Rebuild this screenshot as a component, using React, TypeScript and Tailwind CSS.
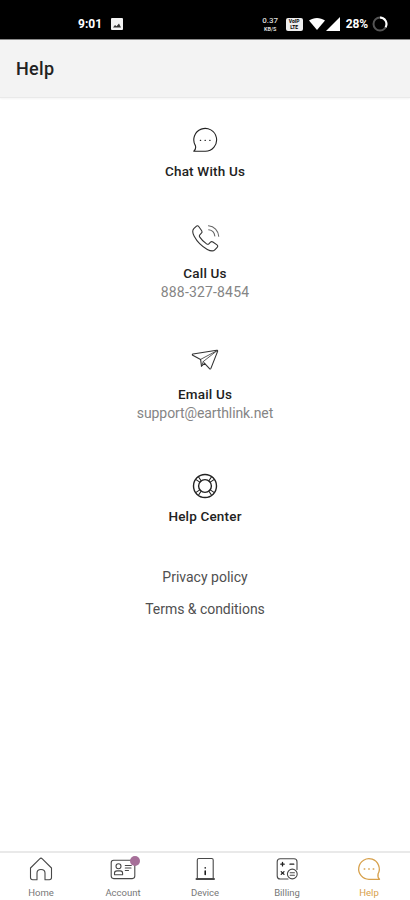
import React from "react";

type DrawingProps = { className?: string; viewBox: string; children: React.ReactNode };

function Drawing({ className = "", viewBox, children }: DrawingProps) {
  return (
    <svg viewBox={viewBox} className={`block shrink-0 ${className}`} fill="none" stroke="currentColor" strokeWidth="1.1" strokeLinecap="round" strokeLinejoin="round" aria-hidden="true">
      {children}
    </svg>
  );
}

function ChatIcon() {
  return (
    <Drawing viewBox="0 0 28 28" className="h-7 w-7 text-[#222]">
      <path d="M4.4 18.6A11.4 11.4 0 1 1 14.3 24.2H2.8C4.4 22.8 5.1 21 4.4 18.6Z" />
      <path d="M9.3 13.3h.4M14 13.3h.4M18.7 13.3h.4" strokeWidth="1.2" />
    </Drawing>
  );
}

function PhoneIcon() {
  return (
    <Drawing viewBox="0 0 30 30" className="h-[30px] w-[30px] text-[#333]">
      <path d="M3.8 4.6 6.2 2.3C7 1.5 8 1.6 8.7 2.5L11.7 6.7C12.3 7.6 12.2 8.5 11.4 9.2L9.8 10.8C9.1 11.5 9.2 12.3 9.8 13.1 11.6 15.8 13.8 18 16.6 19.9 17.4 20.4 18.2 20.5 18.9 19.8L20.5 18.2C21.2 17.5 22 17.4 22.9 18L27 20.9C27.9 21.6 28 22.5 27.2 23.3L24.8 25.8C23.3 27.3 20.8 27.2 17.3 25.4 11.7 22.4 7.2 17.9 4.2 12.3 2.4 8.8 2.3 6.2 3.8 4.6Z" />
      <path d="M18.5 1.8C24.2 2.2 28.3 6.5 28.7 12.2M18.7 5.8C22.3 6.3 24.4 8.6 24.8 12" stroke="#666" />
    </Drawing>
  );
}

function PlaneIcon() {
  return (
    <Drawing viewBox="0 0 28 22" className="h-[22px] w-7 text-[#333]">
      <path d="M1.7 6.2C1.1 5.8 1.2 5.2 2 5L25.7 1.2C26.5 1.1 26.9 1.6 26.6 2.4L19.9 19.4C19.6 20.1 19 20.2 18.5 19.6L13.6 14.3 10.5 17.2 9.6 10.4Z" />
      <path d="M9.6 10.4 26.3 1.5M10.5 17.2 12.3 12.5 26.3 1.5M12.3 12.5 13.6 14.3" strokeWidth="0.8" />
    </Drawing>
  );
}

function BuoyIcon() {
  return (
    <Drawing viewBox="0 0 26 26" className="h-[26px] w-[26px] text-[#222]">
      <circle cx="13" cy="13" r="11.5" strokeWidth="1.4" />
      <circle cx="13" cy="13" r="6.4" strokeWidth="1.4" />
      <path d="M4 6.6 7.8 9.1M6.6 4 9.1 7.8M19.4 4 16.9 7.8M22 6.6 18.2 9.1M4 19.4 7.8 16.9M6.6 22 9.1 18.2M19.4 22 16.9 18.2M22 19.4 18.2 16.9" />
    </Drawing>
  );
}

function StatusBar() {
  return (
    <div className="flex h-10 items-center border-b border-[#8a8a8a] bg-black pt-[9px] pl-[78px] pr-[22px] text-white">
      <span className="w-[33px] text-[12px] leading-4 font-bold">9:01</span>
      <svg viewBox="0 0 12 12" className="h-3 w-3" aria-hidden="true">
        <rect width="12" height="12" rx="1" fill="#f3f3f3" />
        <path d="M2 9.5 4 7l1.5 1.2L8 5.5l2 4z" fill="#333" />
      </svg>
      <div className="ml-auto flex items-center">
        <div className="flex w-[17px] flex-col items-center text-[#ddd]">
          <span className="text-[8px] leading-[10px] font-medium">0.37</span>
          <span className="text-[5.5px] leading-[7px] font-bold">KB/S</span>
        </div>
        <div className="ml-[7px] flex h-[13px] w-[17px] flex-col items-center justify-center rounded-[2px] bg-[#eee] text-black">
          <span className="text-[5px] leading-[6px] font-bold">VoIP</span>
          <span className="text-[5px] leading-[6px] font-bold">LTE</span>
        </div>
        <svg viewBox="0 0 32 14" className="ml-[6px] h-[14px] w-8" fill="white" aria-hidden="true">
          <path d="M0 3.6C4.8 0 11.2 0 16 3.6L8 13Z" />
          <path d="M31 0V14H17Z" />
        </svg>
        <span className="ml-[5px] text-[12px] leading-4 font-bold tracking-[-0.1px]">28%</span>
        <svg viewBox="0 0 16 16" className="ml-[4px] h-4 w-4" fill="none" strokeWidth="2" aria-hidden="true">
          <circle cx="8" cy="8" r="6.5" stroke="#555" />
          <path d="M8 1.5A6.5 6.5 0 0 1 13.6 11.2" stroke="#fff" />
        </svg>
      </div>
    </div>
  );
}

function HomeGlyph() {
  return (
    <Drawing viewBox="0 0 26 26" className="h-[26px] w-[26px]">
      <path d="M2.5 12 11.7 2.8Q13 1.6 14.3 2.8L23.5 12V21.5Q23.5 23.7 21.3 23.7H17V17Q17 13.5 13 13.5T9 17V23.7H4.7Q2.5 23.7 2.5 21.5Z" />
    </Drawing>
  );
}

function AccountGlyph() {
  return (
    <div className="relative">
      <Drawing viewBox="0 0 26 26" className="h-[26px] w-[26px]">
        <rect x="1.2" y="4.2" width="23.6" height="18.4" rx="2.5" />
        <circle cx="8.5" cy="10.3" r="2.5" />
        <path d="M4.5 18.7V17.2Q4.5 14.9 7 14.9H10.2Q12.6 14.9 12.6 17.2V18.7ZM15.3 9.5H21.3M15.3 12H21M15.3 14.5H18.5" />
      </Drawing>
      <span className="absolute top-0 left-[19.5px] h-[10px] w-[10px] rounded-full bg-[#a66f99]" />
    </div>
  );
}

function DeviceGlyph() {
  return (
    <Drawing viewBox="0 0 26 26" className="h-[26px] w-[26px]">
      <path d="M5.3 22V4Q5.3 2.5 6.8 2.5H19.7Q21.2 2.5 21.2 4V22" />
      <path d="M4.5 23H22" strokeWidth="2" />
      <path d="M13.2 11.8V12M13.2 15V18.5" stroke="#111" strokeWidth="1.5" />
    </Drawing>
  );
}

function BillingGlyph() {
  return (
    <Drawing viewBox="0 0 26 26" className="h-[26px] w-[26px]">
      <path d="M14 23H6.2Q3.2 23 3.2 20V5.8Q3.2 2.8 6.2 2.8H20Q23 2.8 23 5.8V13.5" />
      <path d="M6.8 8.2H10.2M8.5 6.5V9.9M16 8.2H19.8M7.2 15.6 10 18.4M10 15.6 7.2 18.4" stroke="#222" strokeWidth="1.3" />
      <circle cx="18.3" cy="18" r="4.9" />
      <path d="M16.2 16.8H20.4M16.2 19.2H20.4" />
    </Drawing>
  );
}

function HelpGlyph() {
  return (
    <Drawing viewBox="0 0 26 26" className="h-[26px] w-[26px]">
      <path d="M22.1 17.8A10.3 10.3 0 1 0 13 23.3H23.5C22.2 22 21.6 20.2 22.1 17.8Z" strokeWidth="1.3" />
      <path d="M8.3 13h.4M12.8 13h.4M17.3 13h.4" strokeWidth="1.6" />
    </Drawing>
  );
}

const tabs = [
  { label: "Home", Glyph: HomeGlyph, active: false },
  { label: "Account", Glyph: AccountGlyph, active: false },
  { label: "Device", Glyph: DeviceGlyph, active: false },
  { label: "Billing", Glyph: BillingGlyph, active: false },
  { label: "Help", Glyph: HelpGlyph, active: true },
];

export default function App() {
  return (
    <div className="flex h-[900px] w-[410px] flex-col overflow-hidden bg-white font-['Roboto',sans-serif]">
      <StatusBar />
      <header className="flex h-[58px] items-center border-b border-[#e9e9e9] bg-[#f3f3f3] pl-4 shadow-[0_1px_2px_rgba(0,0,0,0.05)]">
        <h1 className="text-[18px] leading-6 font-medium tracking-[0.3px] text-[#222]">Help</h1>
      </header>
      <main className="flex flex-1 flex-col items-center pt-[29px]">
        <section className="flex h-[97px] flex-col items-center">
          <ChatIcon />
          <h2 className="mt-[6px] text-[13.5px] leading-5 font-medium tracking-[0.18px] text-[#222]">Chat With Us</h2>
        </section>
        <section className="flex h-[125px] flex-col items-center">
          <PhoneIcon />
          <h2 className="mt-[9px] text-[13.5px] leading-5 font-medium tracking-[0.18px] text-[#222]">Call Us</h2>
          <p className="text-[14px] leading-[19px] tracking-[0.17px] text-[#858585]">888-327-8454</p>
        </section>
        <section className="flex h-[124px] flex-col items-center">
          <PlaneIcon />
          <h2 className="mt-[13px] text-[13.5px] leading-5 font-medium tracking-[0.18px] text-[#222]">Email Us</h2>
          <p className="text-[14px] leading-[19px] tracking-[-0.1px] text-[#858585]">support@earthlink.net</p>
        </section>
        <section className="flex h-[94px] flex-col items-center">
          <BuoyIcon />
          <h2 className="mt-[7px] text-[13.5px] leading-5 font-medium tracking-[0.18px] text-[#222]">Help Center</h2>
        </section>
        <a className="text-[14px] leading-5 text-[#505050]">Privacy policy</a>
        <a className="mt-3 text-[14px] leading-5 tracking-[-0.04px] text-[#505050]">Terms &amp; conditions</a>
      </main>
      <nav className="grid h-[49px] grid-cols-5 border-t-2 border-[#e9e9e9] bg-white">
        {tabs.map(({ label, Glyph, active }) => (
          <div key={label} className={`flex flex-col items-center pt-[3px] ${active ? "text-[#d7a04b]" : "text-[#484848]"}`}>
            <Glyph />
            <span className={`mt-[5px] text-[9.5px] leading-3 ${active ? "text-[#d7a04b]" : "text-[#777]"}`}>{label}</span>
          </div>
        ))}
      </nav>
    </div>
  );
}
